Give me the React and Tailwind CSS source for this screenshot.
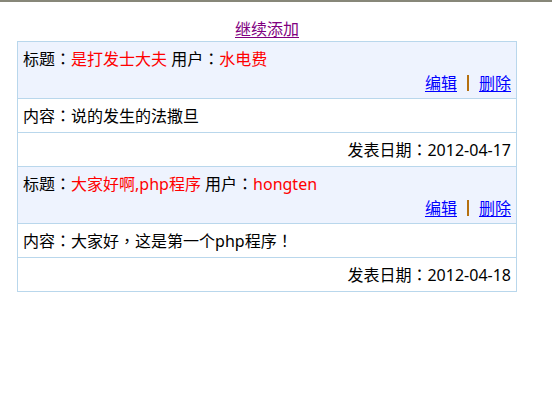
const posts = [
  {
    title: "是打发士大夫",
    user: "水电费",
    content: ["说的发生的法撒旦"],
    date: "2012-04-17",
  },
  {
    title: "大家好啊,php程序",
    user: "hongten",
    content: ["大家好", "，", "这是第一个php程序", "！"],
    date: "2012-04-18",
  },
];

// full-width punctuation centred in its cell, like the original page
function Punct({ children }) {
  return <span className="font-['Noto_Sans_CJK_TC']">{children}</span>;
}

export default function App() {
  return (
    <div
      className="min-h-[394px] bg-white text-[16px] text-black border-t-2 border-[#878779]"
      style={{ fontFamily: '"Noto Sans", "Noto Sans CJK SC", sans-serif' }}
    >
      <div className="w-[500px] ml-[17px] pt-[16px]">
        <div className="text-center leading-[22px] mb-[1px]">
          <a href="#" className="text-[#800080] underline underline-offset-2">
            继续添加
          </a>
        </div>

        <div className="border border-[#b9d7ec]">
          {posts.map((p, i) => (
            <div key={i}>
              {/* title row */}
              <div
                className={`bg-[#eef3fe] px-[5px] py-[4px] ${
                  i > 0 ? "h-[57px] border-t border-[#b9d7ec]" : "h-[56px]"
                }`}
              >
                <div className="leading-[24px]">
                  标题<Punct>：</Punct>
                  <span className="text-[#ff0000]">{p.title}</span> 用户
                  <Punct>：</Punct>
                  <span className="text-[#ff0000]">{p.user}</span>
                </div>
                <div className="leading-[24px] flex justify-end items-center">
                  <a href="#" className="text-[#0000ff] underline underline-offset-2">
                    编辑
                  </a>
                  <span className="mx-[10px] w-[2px] h-[16px] bg-[#b5700f]" />
                  <a href="#" className="text-[#0000ff] underline underline-offset-2">
                    删除
                  </a>
                </div>
              </div>

              {/* content row */}
              <div className="border-t border-[#b9d7ec] px-[5px] h-[34px] flex items-center">
                <span>
                  内容<Punct>：</Punct>
                  {p.content.map((c, j) =>
                    c === "，" || c === "！" ? (
                      <Punct key={j}>{c}</Punct>
                    ) : (
                      <span key={j}>{c}</span>
                    )
                  )}
                </span>
              </div>

              {/* date row */}
              <div className="border-t border-[#b9d7ec] px-[5px] h-[34px] flex items-center justify-end">
                <span>
                  发表日期<Punct>：</Punct>
                  {p.date}
                </span>
              </div>
            </div>
          ))}
        </div>
      </div>
    </div>
  );
}
